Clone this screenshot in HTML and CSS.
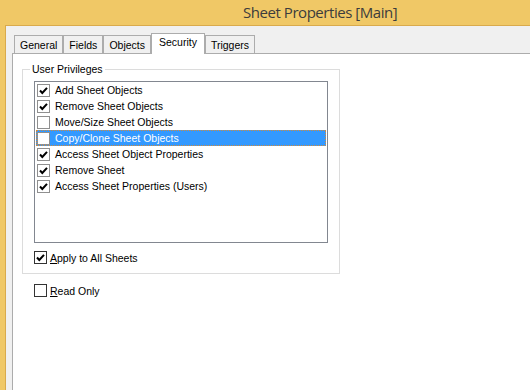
FILE: index.html
```html
<!DOCTYPE html>
<html lang="en">
  <head>
    <meta charset="UTF-8" />
    <title>Sheet Properties [Main]</title>
    <link rel="stylesheet" href="styles.css">
  </head>
  <body>
    <div class="titleBar">Sheet Properties [Main]</div>
    <div class="frame">
      <div class="tabs">
        <div class="tab">General</div>
        <div class="tab">Fields</div>
        <div class="tab">Objects</div>
        <div class="tab active">Security</div>
        <div class="tab">Triggers</div>
      </div>
      <div class="panel">
        <fieldset class="group">
          <legend>User Privileges</legend>
          <ul class="listBox">
            <li><span class="box checked"></span>Add Sheet Objects</li>
            <li><span class="box checked"></span>Remove Sheet Objects</li>
            <li><span class="box"></span>Move/Size Sheet Objects</li>
            <li class="selected"><span class="box"></span>Copy/Clone Sheet Objects</li>
            <li><span class="box checked"></span>Access Sheet Object Properties</li>
            <li><span class="box checked"></span>Remove Sheet</li>
            <li><span class="box checked"></span>Access Sheet Properties (Users)</li>
          </ul>
          <label class="checkRow">
            <span class="box dark checked"></span><span><u>A</u>pply to All Sheets</span>
          </label>
        </fieldset>
        <label class="checkRow readOnly">
          <span class="box dark"></span><span><u>R</u>ead Only</span>
        </label>
      </div>
    </div>
  </body>
</html>
```

FILE: styles.css
```css
* {
  padding: 0;
  margin: 0;
  box-sizing: border-box;
}
body {
  height: 390px;
  overflow: hidden;
  display: flex;
  flex-direction: column;
  background: #f0c866;
  font-family: "Liberation Sans", Arial, sans-serif;
  font-size: 10.5px;
  color: #000;
}
.titleBar {
  height: 25px;
  padding-left: 243px;
  font-family: "Open Sans", sans-serif;
  font-size: 15px;
  letter-spacing: -0.45px;
  line-height: 25px;
  color: #3c3c3c;
}
.frame {
  flex: 1;
  display: flex;
  flex-direction: column;
  margin-left: 5px;
  padding: 7px 0 0 6px;
  background: #f0f0f0;
  border-top: 1px solid #d9aa4c;
  border-left: 1px solid #d9aa4c;
}
.tabs {
  height: 20px;
  display: flex;
  align-items: flex-end;
  padding-left: 2px;
}
.tab {
  height: 18px;
  padding: 0 5px;
  line-height: 18px;
  border: 1px solid #acacac;
  border-bottom: none;
  background: #f0f0f0;
}
.tab.active {
  position: relative;
  z-index: 1;
  height: 21px;
  margin-bottom: -1px;
  padding: 0 7px;
  line-height: 17px;
  background: #fff;
}
.panel {
  flex: 1;
  background: #fff;
  border-top: 1px solid #acacac;
  border-left: 1px solid #acacac;
  padding: 9px 0 0 9px;
}
.group {
  width: 318px;
  border: 1px solid #dcdcdc;
  padding: 0 11px 9px 11px;
}
.group legend {
  margin-left: -4px;
  padding: 0 2px;
  line-height: 13px;
}
.listBox {
  list-style: none;
  width: 294px;
  height: 162px;
  margin-top: 5px;
  border: 1px solid #828790;
}
.listBox li {
  height: 16px;
  display: flex;
  align-items: center;
  gap: 5px;
  margin: 0 1px;
  padding-left: 1px;
}
.listBox li.selected {
  background: #3399ff;
  color: #fff;
  outline: 1px dotted #d08a3c;
  outline-offset: -1px;
}
.box {
  width: 13px;
  height: 13px;
  flex: none;
  background: #fff;
  border: 1px solid #8f8f8f;
}
.box.dark {
  border-color: #333;
}
.box.checked {
  background: #fff url("data:image/svg+xml;utf8,<svg xmlns='http://www.w3.org/2000/svg' width='11' height='11'><path d='M2 5.5 L4.3 8 L9 2.8' fill='none' stroke='black' stroke-width='2'/></svg>") no-repeat center;
}
.checkRow {
  display: flex;
  align-items: center;
  gap: 3px;
  height: 13px;
  margin-top: 8px;
}
.readOnly {
  margin: 10px 0 0 12px;
}
```
